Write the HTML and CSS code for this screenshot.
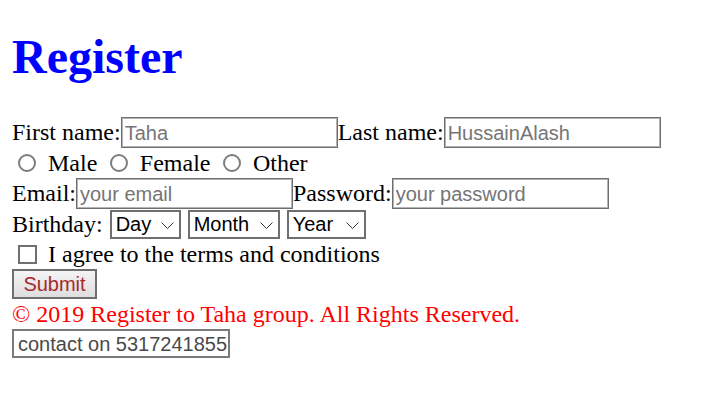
FILE: index.html
```html
<!DOCTYPE html>
<html>
<head>
<meta charset="utf-8">
<title>Register</title>
<link rel="stylesheet" href="styles.css">
</head>
<body>
<h1 class="title">Register</h1>
<form class="form">
  <div class="row">
    <label class="label">First name:</label><input class="field" type="text" placeholder="Taha"><label class="label">Last name:</label><input class="field" type="text" placeholder="HussainAlash">
  </div>
  <div class="row row-radio">
    <input class="radio radio-first" type="radio" name="g"><label class="label">Male</label>
    <input class="radio" type="radio" name="g"><label class="label">Female</label>
    <input class="radio" type="radio" name="g"><label class="label">Other</label>
  </div>
  <div class="row">
    <label class="label">Email:</label><input class="field" type="text" placeholder="your email"><label class="label">Password:</label><input class="field" type="password" placeholder="your password">
  </div>
  <div class="row">
    <label class="label">Birthday:</label>
    <span class="select sel-day"><span>Day</span><svg class="chev" width="13" height="7" viewBox="0 0 13 7"><path d="M0.5 0.5 L6.5 6.5 L12.5 0.5" fill="none" stroke="#333" stroke-width="1"/></svg></span>
    <span class="select sel-month"><span>Month</span><svg class="chev" width="13" height="7" viewBox="0 0 13 7"><path d="M0.5 0.5 L6.5 6.5 L12.5 0.5" fill="none" stroke="#333" stroke-width="1"/></svg></span>
    <span class="select sel-year"><span>Year</span><svg class="chev" width="13" height="7" viewBox="0 0 13 7"><path d="M0.5 0.5 L6.5 6.5 L12.5 0.5" fill="none" stroke="#333" stroke-width="1"/></svg></span>
  </div>
  <div class="row row-check">
    <input class="check" type="checkbox"><label class="label">I agree to the terms and conditions</label>
  </div>
  <div class="row row-submit">
    <button class="submit" type="button">Submit</button>
  </div>
  <div class="row row-footer">
    <span class="copy">© 2019 Register to Taha group. All Rights Reserved.</span>
  </div>
  <div class="row row-contact">
    <span class="contact">contact on 5317241855</span>
  </div>
</form>
</body>
</html>
```
FILE: styles.css
```css
html, body {
  background: #ffffff;
}
body {
  margin: 0;
  padding: 29px 12px 0 12px;
  font-family: "Liberation Serif", "Times New Roman", serif;
  font-size: 24px;
  line-height: 27px;
  color: #000;
}
.title {
  margin: 0 0 32px 0;
  font-size: 48px;
  line-height: 56px;
  font-weight: bold;
  color: #0000ff;
}
.form {
  margin: 0;
}
.row {
  display: flex;
  align-items: center;
  height: 31px;
}
.label {
  white-space: nowrap;
  line-height: 27px;
}
.field {
  box-sizing: border-box;
  width: 217px;
  height: 31px;
  margin: 0;
  padding: 1px 3px 0 3px;
  border: 1px solid #6e6e6e;
  box-shadow: inset 0 0 0 1px #b4b4b4;
  font-family: "Liberation Sans", Arial, sans-serif;
  font-size: 20px;
  color: #000;
  background: #fff;
  outline: none;
}
.field::placeholder {
  color: #757575;
}
.row-radio {
  height: 30px;
}
.radio {
  -webkit-appearance: none;
  appearance: none;
  box-sizing: border-box;
  width: 18px;
  height: 18px;
  margin: 0 12px 0 12.5px;
  border: 2px solid #7d7d7d;
  border-radius: 50%;
  background: #fff;
}
.radio-first {
  margin-left: 6px;
}
.select {
  box-sizing: border-box;
  display: flex;
  align-items: center;
  justify-content: space-between;
  height: 29px;
  margin-left: 7px;
  padding: 0 5px 0 4px;
  border: 2px solid #6f6f6f;
  font-family: "Liberation Sans", Arial, sans-serif;
  font-size: 20px;
  line-height: 23px;
  color: #000;
}
.sel-day { width: 71px; }
.sel-month { width: 92px; }
.sel-year { width: 79px; }
.chev {
  display: block;
  margin-top: 1px;
}
.row-check {
  height: 29px;
}
.check {
  -webkit-appearance: none;
  appearance: none;
  box-sizing: border-box;
  width: 19px;
  height: 19px;
  margin: 0 11px 0 6px;
  border: 2px solid #707070;
  background: #fff;
}
.row-submit {
  height: 30px;
}
.submit {
  box-sizing: border-box;
  width: 85px;
  height: 30px;
  margin: 0;
  padding: 1px 0 0 0;
  border: 2px solid #6e6e6e;
  background: linear-gradient(#f4f4f4, #dedede);
  font-family: "Liberation Sans", Arial, sans-serif;
  font-size: 20px;
  color: #a52a2a;
}
.row-footer {
  height: 29px;
  padding-top: 1px;
  box-sizing: border-box;
}
.copy {
  color: #ff0000;
  white-space: nowrap;
}
.row-contact {
  height: 30px;
  align-items: flex-end;
}
.contact {
  box-sizing: border-box;
  display: flex;
  align-items: center;
  width: 218px;
  height: 29px;
  padding: 1px 3px 0 4px;
  border: 2px solid #7a7a7a;
  font-family: "Liberation Sans", Arial, sans-serif;
  font-size: 20px;
  line-height: 23px;
  color: #4a4a4a;
  white-space: nowrap;
}
```
